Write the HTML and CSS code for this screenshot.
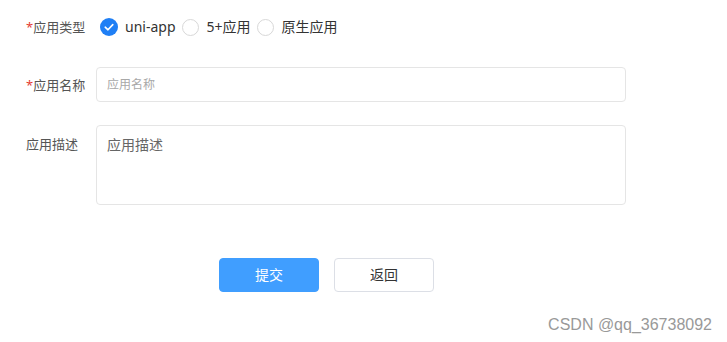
FILE: index.html
```html
<!DOCTYPE html>
<html lang="zh-CN">
<head>
    <meta charset="UTF-8">
    <meta name="viewport" content="width=device-width, initial-scale=1.0">
    <title>应用表单</title>
    <link rel="stylesheet" href="styles.css">
</head>
<body>

<div class="page">
    <form class="app-form">
        <div class="form-row row-type">
            <label class="form-label"><span class="req">*</span>应用类型</label>
            <div class="radio-group">
                <span class="radio checked">
                    <svg viewBox="0 0 18 18" width="18" height="18">
                        <circle cx="9" cy="9" r="9" fill="#1f7ff5"/>
                        <path d="M5.2 9.2 L8 11.8 L12.8 6.6" fill="none" stroke="#fff" stroke-width="1.6" stroke-linecap="round" stroke-linejoin="round"/>
                    </svg>
                </span>
                <span class="radio-text">uni-app</span>
                <span class="radio"></span>
                <span class="radio-text">5+应用</span>
                <span class="radio"></span>
                <span class="radio-text">原生应用</span>
            </div>
        </div>

        <div class="form-row row-name">
            <label class="form-label"><span class="req">*</span>应用名称</label>
            <input class="text-input" type="text" placeholder="应用名称">
        </div>

        <div class="form-row row-desc">
            <label class="form-label">应用描述</label>
            <div class="textarea">应用描述</div>
        </div>

        <div class="actions">
            <button type="button" class="btn btn-primary">提交</button>
            <button type="button" class="btn">返回</button>
        </div>
    </form>

    <div class="watermark">CSDN @qq_36738092</div>
</div>

</body>
</html>
```

FILE: styles.css
```css
* {
    box-sizing: border-box;
    margin: 0;
    padding: 0;
}

body {
    background: #fff;
    color: #333;
    font-family: "Noto Sans", "Noto Sans CJK SC", sans-serif;
    font-size: 13px;
}

.page {
    position: relative;
    width: 727px;
    height: 342px;
}

.app-form {
    padding: 17px 0 0 26px;
    width: 626px;
}

.form-row {
    display: flex;
}

.form-label {
    width: 70px;
    flex-shrink: 0;
    font-size: 13px;
    line-height: 20px;
    color: #555;
}

.req {
    color: #e43d33;
}

.row-type {
    align-items: center;
    height: 20px;
}

.radio-group {
    display: flex;
    align-items: center;
}

.radio {
    display: inline-block;
    width: 17px;
    height: 17px;
    border: 1px solid #d8d8d8;
    border-radius: 50%;
    margin-right: 8px;
}

.radio.checked {
    border: none;
    width: 18px;
    height: 18px;
    margin-left: 4px;
    margin-right: 7px;
}

.radio.checked svg {
    display: block;
}

.radio-text {
    font-size: 14px;
    color: #333;
    margin-right: 6px;
    line-height: 20px;
}

.row-name {
    margin-top: 30px;
    align-items: center;
}

.text-input {
    width: 530px;
    height: 35px;
    border: 1px solid #e5e5e5;
    border-radius: 4px;
    padding: 0 10px;
    font-size: 12px;
    font-family: inherit;
    outline: none;
}

.text-input::placeholder {
    color: #a8a8a8;
}

.row-desc {
    margin-top: 23px;
}

.row-desc .form-label {
    padding-top: 9px;
}

.textarea {
    width: 530px;
    height: 80px;
    border: 1px solid #e5e5e5;
    border-radius: 4px;
    padding: 9px 10px;
    font-size: 14px;
    line-height: 20px;
    color: #666;
}

.actions {
    display: flex;
    gap: 15px;
    margin-top: 53px;
    padding-left: 193px;
}

.btn {
    width: 100px;
    height: 34px;
    border: 1px solid #dcdfe6;
    border-radius: 4px;
    background: #fff;
    color: #333;
    font-size: 14px;
    line-height: 30px;
    font-family: inherit;
    cursor: pointer;
}

.btn-primary {
    background: #409eff;
    border-color: #409eff;
    color: #fff;
}

.watermark {
    position: absolute;
    right: 15px;
    bottom: 8px;
    font-family: "Liberation Sans", Arial, sans-serif;
    font-size: 16px;
    color: #999;
}
```
